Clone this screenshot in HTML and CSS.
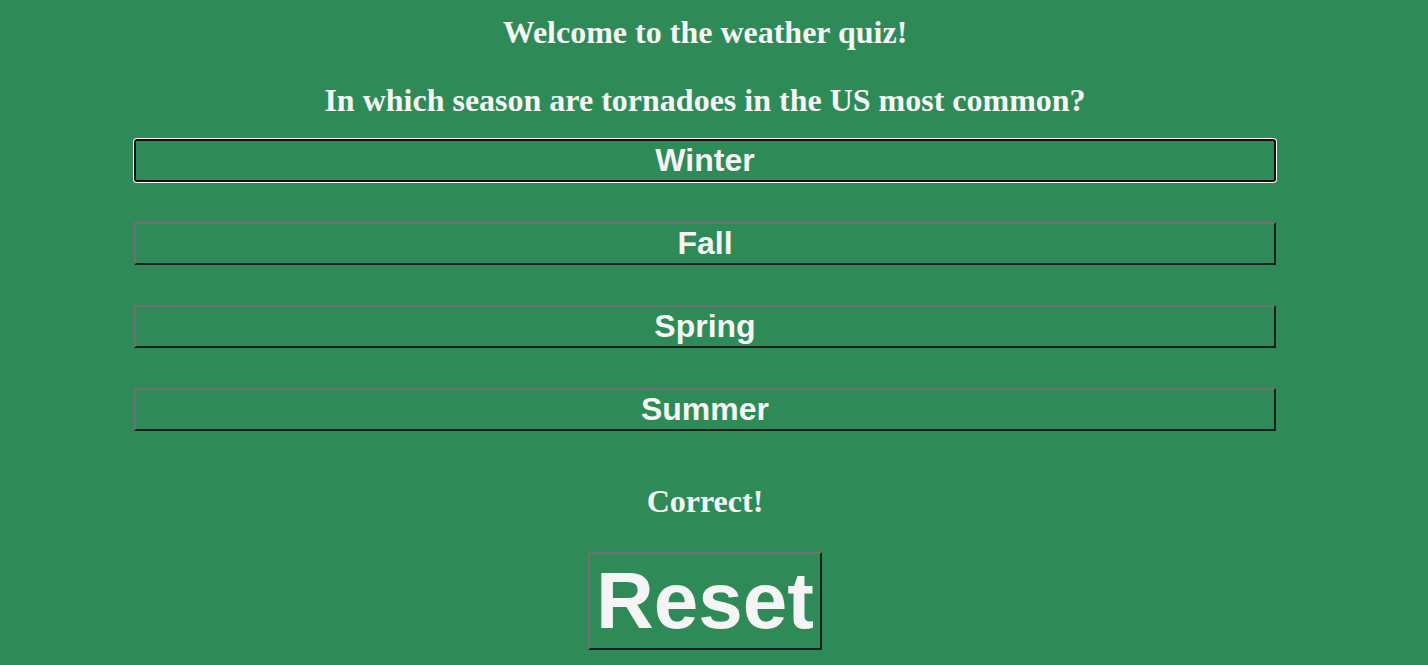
FILE: index.html
```html
<!DOCTYPE html>
<html lang="en">
<head>
<meta charset="utf-8">
<title>Weather Quiz</title>
<link rel="stylesheet" href="styles.css">
</head>
<body>
<main class="quiz">
  <h1 class="heading heading-title">Welcome to the weather quiz!</h1>
  <h1 class="heading heading-question">In which season are tornadoes in the US most common?</h1>
  <div class="answers">
    <button class="answer answer-focused" type="button">Winter</button>
    <button class="answer" type="button">Fall</button>
    <button class="answer" type="button">Spring</button>
    <button class="answer" type="button">Summer</button>
  </div>
  <h1 class="heading heading-result">Correct!</h1>
  <div class="reset-row">
    <button class="reset" type="button">Reset</button>
  </div>
</main>
</body>
</html>
```

FILE: styles.css
```css
html, body {
  margin: 0;
  padding: 0;
  background: #2e8b57;
}

body {
  font-family: "Liberation Serif", "Times New Roman", serif;
  color: #f5f5f5;
}

.quiz {
  width: 1410px;
  display: flex;
  flex-direction: column;
  align-items: center;
  padding-top: 14px;
}

.heading {
  margin: 0;
  font-size: 32px;
  font-weight: bold;
  line-height: 36px;
  text-align: center;
  color: #f5f5f5;
}

.heading-question {
  margin-top: 32px;
}

.answers {
  margin-top: 21px;
  display: flex;
  flex-direction: column;
  gap: 40px;
  align-items: center;
}

.answer,
.reset {
  font-family: "Liberation Sans", Arial, sans-serif;
  font-weight: bold;
  color: #f5f5f5;
  background: #2e8b57;
  border: 2px solid;
  border-color: #707070 #1f1f1f #1f1f1f #707070;
  box-sizing: border-box;
  margin: 0;
}

.answer {
  width: 1142px;
  height: 43px;
  font-size: 32px;
  line-height: 37px;
  padding: 1px 6px;
}

.answer-focused {
  border-color: #101010;
  border-radius: 3px;
  box-shadow: 0 0 0 1px #ffffff;
}

.heading-result {
  margin-top: 52px;
}

.reset-row {
  margin-top: 33px;
  display: flex;
  justify-content: center;
}

.reset {
  width: 234px;
  height: 98px;
  font-size: 80px;
  line-height: 92px;
  padding: 1px 6px;
}
```
